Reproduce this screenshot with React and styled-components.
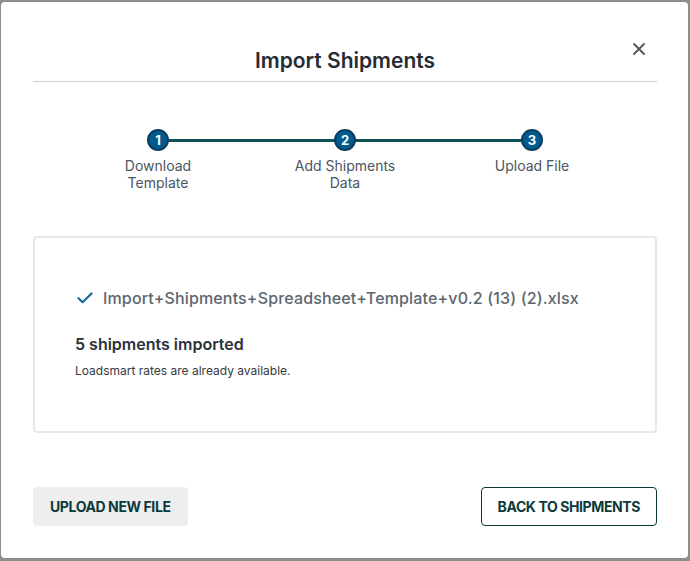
import React from 'react'
import styled, { createGlobalStyle } from 'styled-components'

const GlobalStyle = createGlobalStyle`
  html, body {
    margin: 0;
    padding: 0;
    background: #8b8d90;
    font-family: Inter, "Noto Sans", "Liberation Sans", sans-serif;
  }
  * { box-sizing: border-box; }
`

const steps = [
  { n: 1, label: ['Download', 'Template'] },
  { n: 2, label: ['Add Shipments', 'Data'] },
  { n: 3, label: ['Upload File'] },
]

const App = () => {
  return (
    <>
      <GlobalStyle />
      <Backdrop>
        <Modal>
          <Header>
            <Title>Import Shipments</Title>
            <Close aria-label="close">
              <svg width="12" height="12" viewBox="0 0 12 12">
                <path d="M1 1L11 11M11 1L1 11" stroke="#4a5560" strokeWidth="1.8" strokeLinecap="round" />
              </svg>
            </Close>
          </Header>

          <Stepper>
            {steps.map((s, i) => (
              <Step key={s.n} first={i === 0}>
                <Circle>{s.n}</Circle>
                <StepLabel>
                  {s.label.map((l) => (
                    <div key={l}>{l}</div>
                  ))}
                </StepLabel>
              </Step>
            ))}
          </Stepper>

          <Card>
            <FileRow>
              <svg width="16" height="12" viewBox="0 0 16 12">
                <path d="M1.5 6.2L5.6 10.2L14.5 1.5" fill="none" stroke="#17679a" strokeWidth="2.2" strokeLinecap="round" strokeLinejoin="round" />
              </svg>
              <FileName>Import+Shipments+Spreadsheet+Template+v0.2 (13) (2).xlsx</FileName>
            </FileRow>
            <Imported>5 shipments imported</Imported>
            <Note>Loadsmart rates are already available.</Note>
          </Card>

          <Footer>
            <Button variant="ghost">UPLOAD NEW FILE</Button>
            <Button variant="outline">BACK TO SHIPMENTS</Button>
          </Footer>
        </Modal>
      </Backdrop>
    </>
  )
}

const Backdrop = styled.div`
  width: 690px;
  height: 561px;
  padding: 2px 2px 3px 1px;
`
const Modal = styled.div`
  height: 100%;
  background: #fff;
  border-radius: 4px;
  padding: 0 31px 32px 32px;
  display: flex;
  flex-direction: column;
`
const Header = styled.div`
  position: relative;
  padding-top: 45px;
  padding-bottom: 6px;
  border-bottom: 1px solid #c9d1d7;
  text-align: center;
`
const Title = styled.h2`
  margin: 0;
  font-size: 21px;
  line-height: 28px;
  font-weight: 600;
  color: #262c33;
`
const Close = styled.button`
  position: absolute;
  right: 12px;
  top: 41px;
  width: 12px;
  height: 12px;
  padding: 0;
  border: none;
  background: none;
  display: flex;
  cursor: pointer;
`
const Stepper = styled.div`
  display: grid;
  grid-template-columns: repeat(3, 187px);
  justify-content: center;
  margin-top: 47px;
`
const Step = styled.div`
  position: relative;
  display: flex;
  flex-direction: column;
  align-items: center;

  &::before {
    content: '';
    display: ${(p) => (p.first ? 'none' : 'block')};
    position: absolute;
    top: 10px;
    left: -50%;
    right: 50%;
    height: 3px;
    background: #0e5257;
  }
`
const Circle = styled.div`
  position: relative;
  z-index: 1;
  width: 22px;
  height: 22px;
  border-radius: 50%;
  background: #005b8f;
  border: 2px solid #0b3d60;
  color: #fff;
  font-size: 13px;
  font-weight: 700;
  display: flex;
  align-items: center;
  justify-content: center;
`
const StepLabel = styled.div`
  margin-top: 6px;
  font-size: 14px;
  line-height: 17px;
  color: #4b5660;
  text-align: center;
`
const Card = styled.div`
  margin-top: 45px;
  border: 2px solid #e3e9ee;
  border-radius: 4px;
  padding: 48px 40px 51px;
`
const FileRow = styled.div`
  display: flex;
  align-items: center;
  gap: 10px;
  padding-left: 2px;
`
const FileName = styled.span`
  font-size: 16px;
  line-height: 24px;
  font-weight: 500;
  letter-spacing: 0.15px;
  color: #5b6670;
`
const Imported = styled.div`
  margin-top: 22px;
  font-size: 16px;
  line-height: 24px;
  font-weight: 600;
  color: #2b3138;
`
const Note = styled.div`
  margin-top: 6px;
  font-size: 12px;
  line-height: 18px;
  color: #333a41;
`
const Footer = styled.div`
  margin-top: auto;
  display: flex;
  justify-content: space-between;
  align-items: center;
`
const Button = styled.button`
  height: 39px;
  padding: 0 16px;
  border-radius: 4px;
  font-family: inherit;
  font-size: 14px;
  font-weight: 700;
  letter-spacing: -0.4px;
  color: #0c3a3a;
  cursor: pointer;
  background: ${(p) => (p.variant === 'ghost' ? '#eeeeee' : '#fff')};
  border: ${(p) => (p.variant === 'ghost' ? '1px solid #eeeeee' : '1px solid #0c3a3a')};
`

export default App
